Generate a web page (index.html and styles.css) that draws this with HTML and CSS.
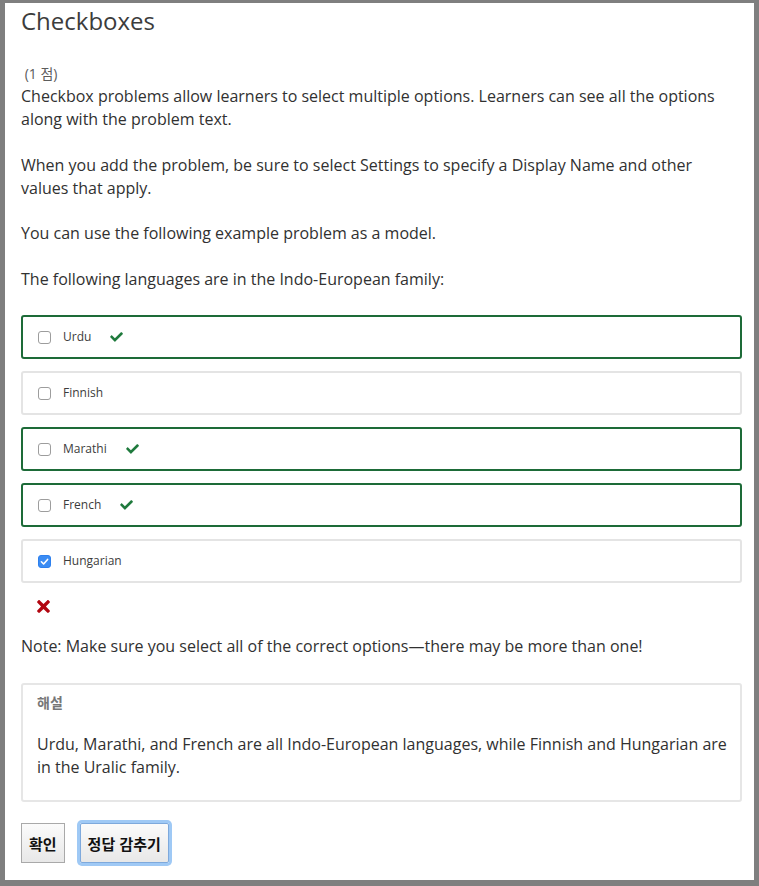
FILE: index.html
```html
<!DOCTYPE html>
<html lang="ko">
<head>
<meta charset="utf-8">
<title>Checkboxes</title>
<link rel="stylesheet" href="styles.css">
</head>
<body>
<div class="page">
  <h2 class="title">Checkboxes</h2>
  <div class="progress">&nbsp;(1 점)</div>
  <p class="para">Checkbox problems allow learners to select multiple options. Learners can see all the options along with the problem text.</p>
  <p class="para">When you add the problem, be sure to select Settings to specify a Display Name and other values that apply.</p>
  <p class="para">You can use the following example problem as a model.</p>
  <p class="para">The following languages are in the Indo-European family:</p>

  <div class="choices">
    <label class="choice correct">
      <input type="checkbox" class="box">
      <span class="label-text">Urdu</span>
      <svg class="check" viewBox="0 60 512 400" aria-hidden="true"><path d="M173.898 439.404l-166.4-166.4c-9.997-9.997-9.997-26.206 0-36.204l36.203-36.204c9.997-9.998 26.207-9.998 36.204 0L192 312.69 432.095 72.596c9.997-9.997 26.207-9.997 36.204 0l36.203 36.204c9.997 9.997 9.997 26.206 0 36.204l-294.4 294.401c-9.998 9.997-26.207 9.997-36.204-.001z"/></svg>
    </label>
    <label class="choice">
      <input type="checkbox" class="box">
      <span class="label-text">Finnish</span>
    </label>
    <label class="choice correct">
      <input type="checkbox" class="box">
      <span class="label-text">Marathi</span>
      <svg class="check" viewBox="0 60 512 400" aria-hidden="true"><path d="M173.898 439.404l-166.4-166.4c-9.997-9.997-9.997-26.206 0-36.204l36.203-36.204c9.997-9.998 26.207-9.998 36.204 0L192 312.69 432.095 72.596c9.997-9.997 26.207-9.997 36.204 0l36.203 36.204c9.997 9.997 9.997 26.206 0 36.204l-294.4 294.401c-9.998 9.997-26.207 9.997-36.204-.001z"/></svg>
    </label>
    <label class="choice correct">
      <input type="checkbox" class="box">
      <span class="label-text">French</span>
      <svg class="check" viewBox="0 60 512 400" aria-hidden="true"><path d="M173.898 439.404l-166.4-166.4c-9.997-9.997-9.997-26.206 0-36.204l36.203-36.204c9.997-9.998 26.207-9.998 36.204 0L192 312.69 432.095 72.596c9.997-9.997 26.207-9.997 36.204 0l36.203 36.204c9.997 9.997 9.997 26.206 0 36.204l-294.4 294.401c-9.998 9.997-26.207 9.997-36.204-.001z"/></svg>
    </label>
    <label class="choice">
      <input type="checkbox" class="box" checked>
      <span class="label-text">Hungarian</span>
    </label>
  </div>

  <div class="status">
    <svg class="cross" viewBox="0 77 352 358" aria-hidden="true"><path d="M242.72 256l100.070-100.070c12.28-12.28 12.28-32.19 0-44.48l-22.240-22.24c-12.28-12.28-32.19-12.28-44.48 0L176 189.28 75.93 89.21c-12.28-12.28-32.19-12.28-44.48 0L9.21 111.45c-12.28 12.28-12.28 32.19 0 44.48L109.28 256 9.21 356.07c-12.28 12.28-12.28 32.19 0 44.48l22.24 22.24c12.28 12.28 32.2 12.28 44.48 0L176 322.72l100.07 100.07c12.28 12.28 32.2 12.28 44.48 0l22.24-22.24c12.28-12.28 12.28-32.19 0-44.480L242.72 256z"/></svg>
  </div>

  <p class="note">Note: Make sure you select all of the correct options—there may be more than one!</p>

  <div class="solution">
    <div class="solution-title">해설</div>
    <p class="solution-text">Urdu, Marathi, and French are all Indo-European languages, while Finnish and Hungarian are in the Uralic family.</p>
  </div>

  <div class="actions">
    <button class="btn" type="button">확인</button>
    <button class="btn btn-focus" type="button">정답 감추기</button>
  </div>
</div>
</body>
</html>
```

FILE: styles.css
```css
html {
  background: #7f7f7f;
}

body {
  margin: 0;
  background: #7f7f7f;
  font-family: "Open Sans", "Noto Sans CJK KR", sans-serif;
  color: #313131;
}

.page {
  margin: 3px 5px 0 5px;
  height: 877px;
  box-sizing: border-box;
  background: #fff;
  padding: 2px 12px 0 16px;
}

.title {
  margin: 0;
  font-size: 24px;
  line-height: 32px;
  font-weight: 400;
  color: #3c3c3c;
}

.progress {
  margin-top: 25px;
  font-size: 14px;
  line-height: 23px;
  color: #5c5c5c;
}

.para {
  margin: 0 0 22.7px 0;
  font-size: 16px;
  line-height: 23px;
}

.choices {
  margin-top: 24px;
  display: flex;
  flex-direction: column;
  gap: 12px;
}

.choice {
  display: flex;
  align-items: center;
  height: 44px;
  box-sizing: border-box;
  border: 2px solid #e4e4e4;
  border-radius: 3px;
  padding: 0 15px;
  font-size: 12px;
  color: #3c3c3c;
}

.choice.correct {
  border-color: #1d6b38;
}

.box {
  appearance: none;
  -webkit-appearance: none;
  margin: 0 12px 0 0;
  width: 13px;
  height: 13px;
  box-sizing: border-box;
  border: 1px solid #9d9d9d;
  border-radius: 3px;
  background: #fff;
  flex: none;
}

.box:checked {
  border-color: #2d80ee;
  background: #3b8cf3 url("data:image/svg+xml;utf8,<svg xmlns='http://www.w3.org/2000/svg' viewBox='0 0 13 13'><path d='M3.4 6.8l2.2 2.2 4-4.6' fill='none' stroke='white' stroke-width='1.6' stroke-linecap='round' stroke-linejoin='round'/></svg>") center/13px 13px no-repeat;
}

.label-text {
  line-height: 16px;
}

.check {
  margin-left: 19px;
  width: 13px;
  height: 10px;
  fill: #1f7a3d;
}

.status {
  padding: 17px 0 0 16px;
  height: 13px;
}

.cross {
  display: block;
  width: 13px;
  height: 13px;
  fill: #b20610;
}

.note {
  margin: 22px 0 0 0;
  font-size: 16px;
  line-height: 23px;
}

.solution {
  margin-top: 25px;
  border: 2px solid #e6e6e6;
  border-radius: 3px;
  padding: 8px 6px 21px 14px;
}

.solution-title {
  font-size: 14px;
  line-height: 20px;
  font-weight: 600;
  color: #777;
}

.solution-text {
  margin: 20px 0 0 0;
  font-size: 16px;
  line-height: 23px;
}

.actions {
  margin-top: 21px;
  display: flex;
  gap: 15px;
  align-items: flex-start;
}

.btn {
  height: 40px;
  padding: 0 7px;
  border: 1px solid #a9a9a9;
  border-radius: 0;
  background: linear-gradient(#fbfbfb, #e8e8e8);
  font-family: "Noto Sans CJK KR", "Open Sans", sans-serif;
  font-size: 15px;
  font-weight: 700;
  color: #111;
}

.btn-focus {
  padding: 0 7px;
  border-color: #7ea9dc;
  border-radius: 2px;
  box-shadow: 0 0 0 3px #9fc9f5;
}
```
